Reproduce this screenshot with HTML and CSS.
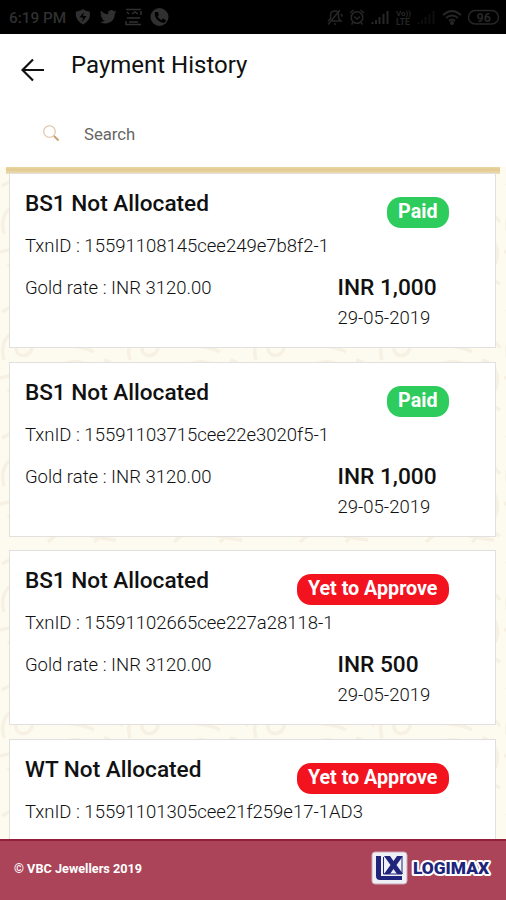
FILE: index.html
```html
<!DOCTYPE html>
<html lang="en">
  <head>
  <meta charset="utf-8">
  <title>Payment History</title>
  <link rel="stylesheet" href="styles.css">
</head>
<body>
  <div class="status-bar">
    <span class="time">6:19 PM</span>
    <svg class="status-left" width="96" height="20" viewBox="0 0 96 20">
      <path d="M9 2C6 4 4 4 2 4.500C1 10 3 14 9 17.500C15 14 17 10 15.500 4.500C13 4 11 4 9 2Z" fill="currentColor"/>
      <path d="M10 5L5.500 10.500H9L8 15L12.500 9H9Z" fill="#000"/>
      <path transform="translate(26 1.500) scale(.69)" d="M23.9 4.6a10 10 0 0 1-2.8.8 5 5 0 0 0 2.1-2.7c-1 .6-2 1-3.1 1.2a4.9 4.9 0 0 0-8.4 4.5A14 14 0 0 1 1.6 3.2a4.9 4.9 0 0 0 1.5 6.500 5 5 0 0 1-2.2-.6 4.9 4.9 0 0 0 3.9 4.9 5 5 0 0 1-2.2 0 4.9 4.9 0 0 0 4.6 3.4A9.9 9.9 0 0 1 0 19.5a14 14 0 0 0 21.5-12.4 10 10 0 0 0 2.4-2.5Z" fill="currentColor"/>
      <path d="M52 2.500H67M53 5L55 7M58 7L61 5L64 7M67 4V8M53 11H66M52 17.500H67M52 14V18M55 15H64" fill="none" stroke="currentColor" stroke-width="1.500"/>
      <circle cx="85.500" cy="10" r="9" fill="currentColor"/>
      <path d="M81 5L84 5L85 8L83.500 9.500Q85 12 87.500 13L89 11.500L92 13L91 15.500Q87 16.500 83 12.500Q80 8.500 81 5Z" fill="#000"/>
    </svg>
    <svg class="status-right" width="178" height="20" viewBox="0 0 178 20" fill="none" stroke="currentColor" stroke-width="1.500">
      <path d="M2 14L4.500 11.500V8Q5 4 9 4Q12.500 4 12.500 8V11.500L15 14H6M8 17H10M2 17.500L14 3M15 7L16.500 9.500"/>
      <circle cx="31" cy="10.500" r="5.800"/>
      <path d="M28 9.500L31 12L34 9.500M24 6L27.500 3M34.500 3L38 6M27 15.500L25.500 17.500M35 15.500L36.500 17.500"/>
      <path d="M46.500 17V15M50 17V13M53.500 17V10M57.500 17V7M61.500 17V4" stroke-width="2"/>
      <path d="M92.500 17V15M96 17V13M99.500 17V10M103.500 17V7M107.500 17V4" stroke-width="2" opacity=".35"/>
      <path d="M117 8Q126 0 135 8M120 11Q126 6 132 11M123 14Q126 11 129 14" stroke-width="1.800"/>
      <circle cx="126" cy="16" r="1.300" fill="currentColor"/>
      <rect x="142.500" y="3.500" width="30" height="13.500" rx="6.700"/>
      <g class="status-text">
        <text x="70" y="9" font-size="8">Vo))</text>
        <text x="70" y="17.500" font-size="8.500">LTE</text>
        <text x="150.500" y="14.500" font-size="12.500">96</text>
      </g>
    </svg>
  </div>

  <div class="header">
    <svg class="back" width="24" height="24" viewBox="0 0 24 24">
      <path d="M23 12H2M12 1.500L1.500 12L12 22.500" fill="none" stroke="#111" stroke-width="2.200"/>
    </svg>
    <h1>Payment History</h1>
  </div>
  <div class="search">
    <svg width="18" height="18" viewBox="0 0 18 18" fill="none">
      <circle cx="7.500" cy="6.500" r="5.800" stroke="#dfbfa3" stroke-width="1.100"/>
      <path d="M12 11L16.500 15.500" stroke="#c99d6d" stroke-width="1.800"/>
    </svg>
    <span>Search</span>
  </div>

  <div class="content">
    <svg class="pattern" width="506" height="672">
      <defs>
        <pattern id="floral" width="126" height="126" patternUnits="userSpaceOnUse">
          <g fill="none" stroke="#f7f1e3" stroke-width="3.500">
            <path d="M4 60C-4 30 28 22 32 44C34 58 14 60 16 46M0 78C30 70 42 84 34 104M8 92C18 82 30 94 20 104"/>
            <path d="M52 8C72 -8 94 14 80 28C68 38 54 24 66 18M46 34C54 50 76 42 94 52M88 4C104 4 116 14 112 30"/>
            <path d="M56 74C64 54 96 60 94 80C92 96 70 94 76 80M104 60C124 64 124 92 108 98M48 116C66 96 86 112 116 114"/>
            <path d="M94 116Q108 100 122 110M2 12Q20 0 30 14M100 42Q112 34 122 48"/>
          </g>
        </pattern>
      </defs>
      <rect width="506" height="672" fill="url(#floral)"/>
    </svg>
    <div class="card">
      <div class="row">
        <h2>BS1 Not Allocated</h2>
        <span class="badge paid">Paid</span>
      </div>
      <p class="txn">TxnID : 15591108145cee249e7b8f2-1</p>
      <div class="row">
        <p>Gold rate : INR 3120.00</p>
        <div class="amount"><b>INR 1,000</b><p>29-05-2019</p></div>
      </div>
    </div>
    <div class="card">
      <div class="row">
        <h2>BS1 Not Allocated</h2>
        <span class="badge paid">Paid</span>
      </div>
      <p class="txn">TxnID : 15591103715cee22e3020f5-1</p>
      <div class="row">
        <p>Gold rate : INR 3120.00</p>
        <div class="amount"><b>INR 1,000</b><p>29-05-2019</p></div>
      </div>
    </div>
    <div class="card">
      <div class="row">
        <h2>BS1 Not Allocated</h2>
        <span class="badge pending">Yet to Approve</span>
      </div>
      <p class="txn">TxnID : 15591102665cee227a28118-1</p>
      <div class="row">
        <p>Gold rate : INR 3120.00</p>
        <div class="amount"><b>INR 500</b><p>29-05-2019</p></div>
      </div>
    </div>
    <div class="card">
      <div class="row">
        <h2>WT Not Allocated</h2>
        <span class="badge pending">Yet to Approve</span>
      </div>
      <p class="txn">TxnID : 15591101305cee21f259e17-1AD3</p>
    </div>
  </div>

  <div class="footer">
    <span>© VBC Jewellers 2019</span>
    <svg width="121" height="36" viewBox="0 0 121 36">
      <rect x="1" y="1" width="35" height="32" rx="3" fill="#eef0f6" stroke="#c9a9b8"/>
      <path d="M5 5H10V25H31V29H9Q5 29 5 25Z" fill="#20247b"/>
      <path d="M12.500 6V23H31V6" fill="none" stroke="#20247b" stroke-width="1"/>
      <path d="M13 5H19L22.500 10L26 5H32L25.500 14L32 23H26L22.500 18L19 23H13L19.500 14Z" fill="#20247b"/>
      <text class="logo-text" x="42" y="23" textLength="76" lengthAdjust="spacingAndGlyphs">LOGIMAX</text>
    </svg>
  </div>
</body>
</html>
```
FILE: styles.css
```css
body {
  margin: 0;
  height: 900px;
  overflow: hidden;
  display: flex;
  flex-direction: column;
  font-family: Roboto, sans-serif;
  background-color: #fff;
  color: #111;
}

h1, h2, p {
  margin: 0;
}

.status-bar {
  height: 34px;
  flex-shrink: 0;
  display: flex;
  align-items: center;
  box-sizing: border-box;
  padding-left: 9px;
  background-color: #000;
  color: #303030;
}

.time {
  width: 65px;
  padding-top: 2px;
  font-size: 15.3px;
  font-weight: 500;
  white-space: nowrap;
}

.status-right {
  margin-left: auto;
  margin-right: 2px;
  color: #272727;
}

.status-text {
  fill: currentColor;
  stroke: none;
  font-weight: bold;
}

.header {
  height: 66px;
  flex-shrink: 0;
  display: flex;
  align-items: flex-start;
  box-sizing: border-box;
  padding: 16px 21px;
}

.back {
  margin-top: 8px;
}

h1 {
  margin-left: 26px;
  font-size: 24px;
  line-height: 30px;
  font-weight: normal;
}

.search {
  height: 67px;
  flex-shrink: 0;
  display: flex;
  align-items: center;
  box-sizing: border-box;
  padding-left: 42px;
  color: #666;
  font-size: 16.7px;
}

.search span {
  margin-left: 24px;
  padding-top: 2px;
}

.content {
  flex: 1;
  min-height: 0;
  overflow: hidden;
  position: relative;
  display: flex;
  flex-direction: column;
  gap: 13.5px;
  padding: 6.4px 10.5px 0 9.4px;
  background: linear-gradient(#ead5a3, #e2c98f 40%, #eedfbc) center top / 494px 7px no-repeat #fdfaf0;
}

.pattern {
  position: absolute;
  top: 7px;
  left: 0;
}

.card {
  position: relative;
  height: 175px;
  flex-shrink: 0;
  box-sizing: border-box;
  padding: 15px 46px 0 14.5px;
  border: 1px solid #e2e0de;
  background-color: #fff;
  font-size: 18.5px;
  line-height: 28px;
  font-weight: 300;
}

.row {
  display: flex;
  justify-content: space-between;
  align-items: flex-start;
}

h2 {
  font-size: 22.6px;
  line-height: 30px;
  font-weight: 500;
}

.badge {
  height: 31px;
  margin-top: 8px;
  padding: 0 11px;
  border-radius: 14px;
  color: #fff;
  font-size: 19.7px;
  line-height: 30px;
  font-weight: bold;
}

.paid {
  background-color: #2dcc5c;
}

.pending {
  background-color: #f2131f;
}

.txn {
  margin: 4px 0 14px;
}

.card .row:first-child {
  height: 39px;
}

.amount {
  width: 111px;
}

.amount b {
  display: block;
  height: 30px;
  font-size: 22.7px;
  font-weight: 500;
}

.footer {
  height: 61px;
  flex-shrink: 0;
  display: flex;
  align-items: center;
  justify-content: space-between;
  box-sizing: border-box;
  padding: 0 14px 4px;
  border-top: 2px solid #941f3c;
  background-color: #ab4458;
  color: #fff;
  font-size: 12.7px;
  font-weight: bold;
}

.logo-text {
  fill: #20247b;
  stroke: #fff;
  stroke-width: 4px;
  stroke-linejoin: round;
  paint-order: stroke;
  font-size: 16px;
  font-weight: 900;
}
```
